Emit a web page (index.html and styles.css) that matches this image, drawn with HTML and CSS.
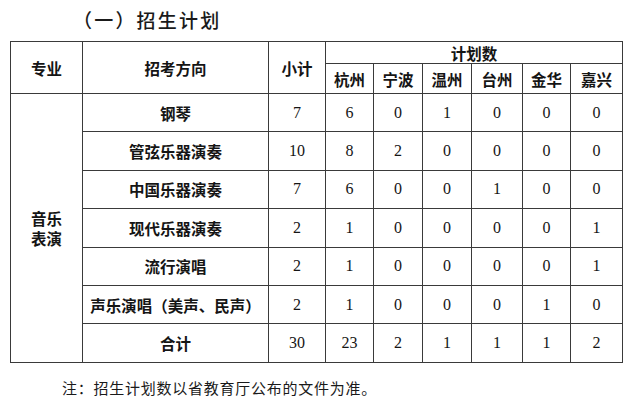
FILE: index.html
```html
<!DOCTYPE html>
<html lang="zh-CN">
<head>
<meta charset="utf-8">
<title>招生计划</title>
<link rel="stylesheet" href="styles.css">
</head>
<body>
<div class="page">
  <h2 class="title">（一）招生计划</h2>
  <table class="plan">
    <colgroup>
      <col class="c-major">
      <col class="c-dir">
      <col class="c-sum">
      <col class="c-city48">
      <col class="c-city49">
      <col class="c-city49">
      <col class="c-city51">
      <col class="c-city48">
      <col class="c-city53">
    </colgroup>
    <thead>
      <tr class="h1">
        <th rowspan="2">专业</th>
        <th rowspan="2">招考方向</th>
        <th rowspan="2">小计</th>
        <th colspan="6">计划数</th>
      </tr>
      <tr class="h2">
        <th>杭州</th><th>宁波</th><th>温州</th><th>台州</th><th>金华</th><th>嘉兴</th>
      </tr>
    </thead>
    <tbody>
      <tr>
        <td class="major" rowspan="7">音乐<br>表演</td>
        <td class="dir">钢琴</td><td class="n">7</td><td class="n">6</td><td class="n">0</td><td class="n">1</td><td class="n">0</td><td class="n">0</td><td class="n">0</td>
      </tr>
      <tr>
        <td class="dir">管弦乐器演奏</td><td class="n">10</td><td class="n">8</td><td class="n">2</td><td class="n">0</td><td class="n">0</td><td class="n">0</td><td class="n">0</td>
      </tr>
      <tr>
        <td class="dir">中国乐器演奏</td><td class="n">7</td><td class="n">6</td><td class="n">0</td><td class="n">0</td><td class="n">1</td><td class="n">0</td><td class="n">0</td>
      </tr>
      <tr>
        <td class="dir">现代乐器演奏</td><td class="n">2</td><td class="n">1</td><td class="n">0</td><td class="n">0</td><td class="n">0</td><td class="n">0</td><td class="n">1</td>
      </tr>
      <tr>
        <td class="dir">流行演唱</td><td class="n">2</td><td class="n">1</td><td class="n">0</td><td class="n">0</td><td class="n">0</td><td class="n">0</td><td class="n">1</td>
      </tr>
      <tr>
        <td class="dir">声乐演唱（美声、民声）</td><td class="n">2</td><td class="n">1</td><td class="n">0</td><td class="n">0</td><td class="n">0</td><td class="n">1</td><td class="n">0</td>
      </tr>
      <tr>
        <td class="dir">合计</td><td class="n">30</td><td class="n">23</td><td class="n">2</td><td class="n">1</td><td class="n">1</td><td class="n">1</td><td class="n">2</td>
      </tr>
    </tbody>
  </table>
  <p class="note">注：招生计划数以省教育厅公布的文件为准。</p>
</div>
</body>
</html>
```

FILE: styles.css
```css
html, body {
  margin: 0;
  padding: 0;
  background: #ffffff;
}
body {
  font-family: "Noto Sans CJK SC", "Noto Sans", sans-serif;
  color: #151515;
}
.page {
  padding: 0 0 0 10px;
  width: 621px;
}
.title {
  margin: 0;
  padding: 9px 0 0 63px;
  height: 41px;
  box-sizing: border-box;
  font-size: 19px;
  line-height: 22px;
  font-weight: 500;
  letter-spacing: 2.2px;
  color: #1a1a1a;
}
.plan {
  border-collapse: collapse;
  table-layout: fixed;
  width: 613px;
  border: 1.5px solid #3a3a3a;
}
.plan th,
.plan td {
  border: 1.5px solid #3a3a3a;
  padding: 0;
  text-align: center;
  vertical-align: middle;
}
.c-major { width: 72px; }
.c-dir { width: 186px; }
.c-sum { width: 57px; }
.c-city48 { width: 48px; }
.c-city49 { width: 49px; }
.c-city51 { width: 51px; }
.c-city53 { width: 52px; }
.plan th {
  font-size: 15.5px;
  font-weight: 700;
  line-height: 18px;
}
.h1 { height: 22px; }
.h2 { height: 30px; }
.plan tbody tr { height: 38.4px; }
.plan td.major,
.plan td.dir {
  font-size: 15.5px;
  font-weight: 700;
  line-height: 20px;
}
.plan td.n {
  font-family: "Liberation Serif", "Times New Roman", serif;
  font-size: 16px;
  line-height: 18px;
}
.note {
  margin: 16px 0 0 52px;
  font-size: 15px;
  line-height: 18px;
  letter-spacing: 0.75px;
  color: #1a1a1a;
}
```
